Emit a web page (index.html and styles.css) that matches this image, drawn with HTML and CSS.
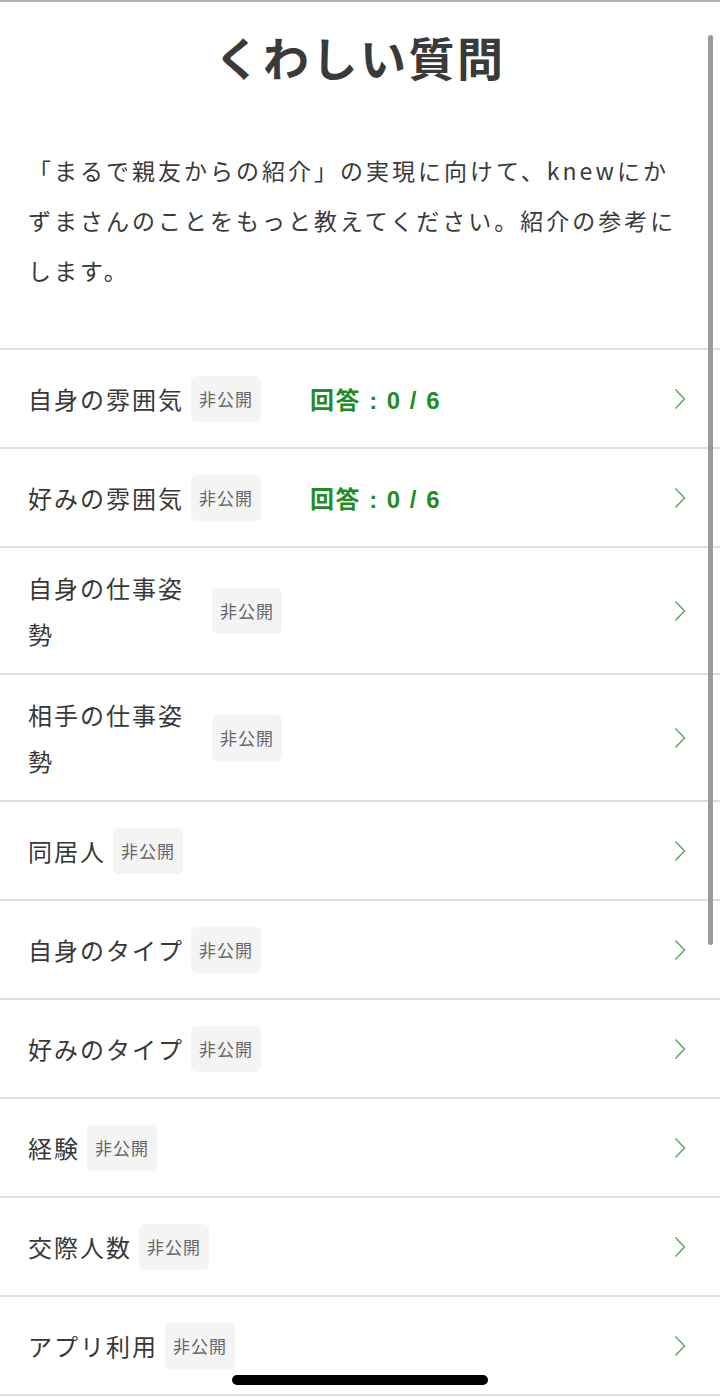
FILE: index.html
```html
<!DOCTYPE html>
<html lang="ja">
<head>
    <meta charset="UTF-8">
    <meta name="viewport" content="width=device-width, initial-scale=1.0">
    <title>くわしい質問 - knew</title>
    <link rel="stylesheet" href="styles.css">
</head>
<body>

<div class="sheet">
    <h1 class="title">くわしい質問</h1>
    <p class="intro">「まるで親友からの紹介」の実現に向けて、knewにかずまさんのことをもっと教えてください。紹介の参考にします。</p>

    <ul class="list">
        <li class="row">
            <div class="row-main"><span class="label">自身の雰囲気</span><span class="badge">非公開</span></div>
            <span class="answer">回答 : 0 / 6</span>
            <svg class="chev" width="12" height="22" viewBox="0 0 12 22"><path d="M1.5 1.5 L10.5 11 L1.5 20.5"/></svg>
        </li>
        <li class="row">
            <div class="row-main"><span class="label">好みの雰囲気</span><span class="badge">非公開</span></div>
            <span class="answer">回答 : 0 / 6</span>
            <svg class="chev" width="12" height="22" viewBox="0 0 12 22"><path d="M1.5 1.5 L10.5 11 L1.5 20.5"/></svg>
        </li>
        <li class="row">
            <div class="row-main"><span class="label">自身の仕事姿勢</span><span class="badge">非公開</span></div>
            <svg class="chev" width="12" height="22" viewBox="0 0 12 22"><path d="M1.5 1.5 L10.5 11 L1.5 20.5"/></svg>
        </li>
        <li class="row">
            <div class="row-main"><span class="label">相手の仕事姿勢</span><span class="badge">非公開</span></div>
            <svg class="chev" width="12" height="22" viewBox="0 0 12 22"><path d="M1.5 1.5 L10.5 11 L1.5 20.5"/></svg>
        </li>
        <li class="row">
            <div class="row-main"><span class="label">同居人</span><span class="badge">非公開</span></div>
            <svg class="chev" width="12" height="22" viewBox="0 0 12 22"><path d="M1.5 1.5 L10.5 11 L1.5 20.5"/></svg>
        </li>
        <li class="row">
            <div class="row-main"><span class="label">自身のタイプ</span><span class="badge">非公開</span></div>
            <svg class="chev" width="12" height="22" viewBox="0 0 12 22"><path d="M1.5 1.5 L10.5 11 L1.5 20.5"/></svg>
        </li>
        <li class="row">
            <div class="row-main"><span class="label">好みのタイプ</span><span class="badge">非公開</span></div>
            <svg class="chev" width="12" height="22" viewBox="0 0 12 22"><path d="M1.5 1.5 L10.5 11 L1.5 20.5"/></svg>
        </li>
        <li class="row">
            <div class="row-main"><span class="label">経験</span><span class="badge">非公開</span></div>
            <svg class="chev" width="12" height="22" viewBox="0 0 12 22"><path d="M1.5 1.5 L10.5 11 L1.5 20.5"/></svg>
        </li>
        <li class="row">
            <div class="row-main"><span class="label">交際人数</span><span class="badge">非公開</span></div>
            <svg class="chev" width="12" height="22" viewBox="0 0 12 22"><path d="M1.5 1.5 L10.5 11 L1.5 20.5"/></svg>
        </li>
        <li class="row">
            <div class="row-main"><span class="label">アプリ利用</span><span class="badge">非公開</span></div>
            <svg class="chev" width="12" height="22" viewBox="0 0 12 22"><path d="M1.5 1.5 L10.5 11 L1.5 20.5"/></svg>
        </li>
    </ul>
</div>

<div class="scrollbar"></div>
<div class="home-bar"></div>

</body>
</html>
```

FILE: styles.css
```css
body {
    margin: 0;
    background: #fff;
    font-family: "Noto Sans CJK JP", "Noto Sans", sans-serif;
    color: #333;
    overflow: hidden;
}
.sheet {
    border-top: 2px solid #b5b5b5;
}
.title {
    margin: 0;
    padding-top: 22px;
    font-size: 46px;
    line-height: 64px;
    font-weight: 700;
    letter-spacing: 2.5px;
    text-align: center;
    color: #3a3a3a;
}
.intro {
    margin: 57px 0 0;
    padding: 0 36px 0 28px;
    font-size: 23px;
    line-height: 50px;
    letter-spacing: 3px;
    color: #3a3a3a;
}
.list {
    list-style: none;
    margin: 53px 0 0;
    padding: 0;
    border-top: 2px solid #dedede;
}
.row {
    display: flex;
    align-items: center;
    box-sizing: border-box;
    min-height: 99px;
    padding: 17px 34px 17px 28px;
    border-bottom: 2px solid #dedede;
}
.row-main {
    display: flex;
    align-items: center;
    gap: 7px;
    width: 254px;
}
.label {
    min-width: 0;
    font-size: 24px;
    line-height: 45.5px;
    letter-spacing: 2px;
    color: #383838;
}
.badge {
    flex-shrink: 0;
    padding: 0 8px;
    height: 46px;
    line-height: 46px;
    border-radius: 6px;
    background: #f4f4f5;
    font-size: 17px;
    letter-spacing: 1px;
    color: #666;
}
.answer {
    margin-left: 28px;
    font-family: "Liberation Sans", "Noto Sans CJK JP", sans-serif;
    font-size: 24px;
    font-weight: 700;
    color: #1f8d24;
    letter-spacing: 1.5px;
}
.chev {
    margin-left: auto;
    fill: none;
    stroke: #5fa865;
    stroke-width: 1.5;
}
.scrollbar {
    position: fixed;
    top: 35px;
    right: 7px;
    width: 5px;
    height: 910px;
    border-radius: 3px;
    background: #9a9a9a;
}
.home-bar {
    position: fixed;
    left: 232px;
    bottom: 13px;
    width: 256px;
    height: 10px;
    border-radius: 5px;
    background: #000;
}
```
